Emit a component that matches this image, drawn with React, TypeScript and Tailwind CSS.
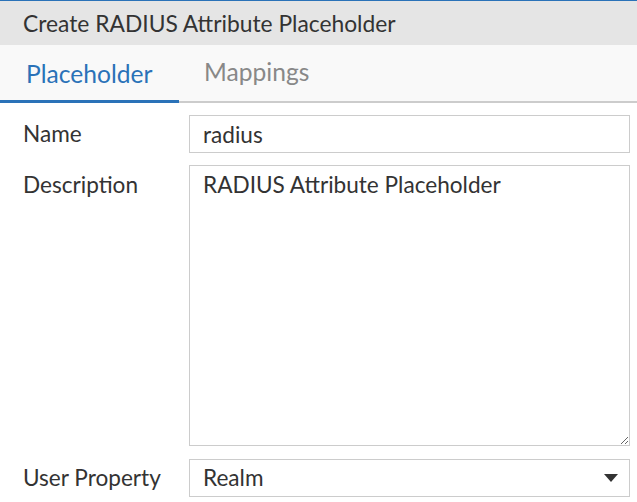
export default function App() {
  return (
    <div className="w-[637px] h-[502px] overflow-hidden bg-white font-['Lato',sans-serif] text-[#333]">
      {/* Dialog header */}
      <div className="h-[45px] border-t border-[#2a72b8] bg-[#e5e5e5] pl-[23px] flex items-center text-[22.8px]">
        Create RADIUS Attribute Placeholder
      </div>

      {/* Tabs */}
      <div className="h-[58px] bg-[#f9f9f9] border-b-2 border-[#cccccc] flex items-end">
        <div className="w-[179px] h-full flex items-center pl-[26px] text-[24.6px] text-[#2a72b8] border-b-[3px] border-[#2a72b8] -mb-[2px] pt-[1px]">
          Placeholder
        </div>
        <div className="h-full flex items-center pl-[25px] text-[24.6px] text-[#888] pb-[1px]">Mappings</div>
      </div>

      {/* Form */}
      <div className="pl-[23px] pr-[7px] pt-[12px] flex flex-col gap-[12px]">
        <div className="flex items-center">
          <label className="w-[166px] text-[22.6px]">Name</label>
          <input
            readOnly
            value="radius"
            className="flex-1 h-[38px] border border-[#cccccc] px-[13px] text-[22.6px] text-[#333] outline-none"
          />
        </div>
        <div className="flex items-start">
          <label className="w-[166px] text-[22.6px] pt-[3px]">Description</label>
          <textarea
            readOnly
            value="RADIUS Attribute Placeholder"
            className="flex-1 h-[281px] border border-[#cccccc] px-[13px] pt-[3px] text-[22.6px] leading-[1.4] text-[#333] outline-none resize"
          />
        </div>
        <div className="flex items-center mt-[1px]">
          <label className="w-[166px] text-[22.6px]">User Property</label>
          <div className="flex-1 h-[38px] border border-[#cccccc] px-[13px] flex items-center justify-between">
            <span className="text-[22.6px]">Realm</span>
            <svg width="14" height="8" viewBox="0 0 14 8" className="mr-[-2px]">
              <path d="M0 0h14L7 8z" fill="#333" />
            </svg>
          </div>
        </div>
      </div>
    </div>
  );
}
